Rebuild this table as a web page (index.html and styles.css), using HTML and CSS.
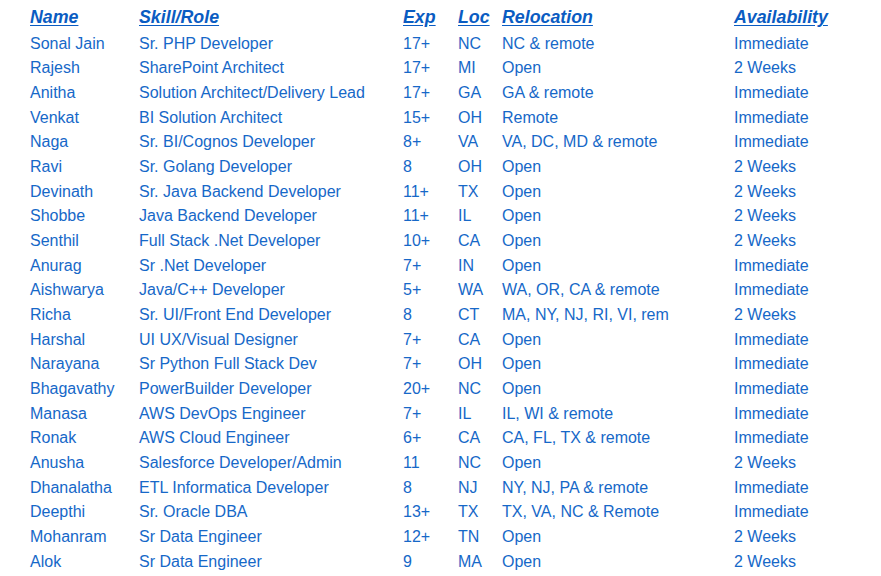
FILE: index.html
```html
<!DOCTYPE html>
<html>
<head>
<meta charset="utf-8">
<link rel="stylesheet" href="styles.css">
</head>
<body>
<div class="roster">
  <div class="row head">
    <span>Name</span><span>Skill/Role</span><span>Exp</span><span>Loc</span><span>Relocation</span><span>Availability</span>
  </div>
  <div class="row"><span>Sonal Jain</span><span>Sr. PHP Developer</span><span>17+</span><span>NC</span><span>NC &amp; remote</span><span>Immediate</span></div>
  <div class="row"><span>Rajesh</span><span>SharePoint Architect</span><span>17+</span><span>MI</span><span>Open</span><span>2 Weeks</span></div>
  <div class="row"><span>Anitha</span><span>Solution Architect/Delivery Lead</span><span>17+</span><span>GA</span><span>GA &amp; remote</span><span>Immediate</span></div>
  <div class="row"><span>Venkat</span><span>BI Solution Architect</span><span>15+</span><span>OH</span><span>Remote</span><span>Immediate</span></div>
  <div class="row"><span>Naga</span><span>Sr. BI/Cognos Developer</span><span>8+</span><span>VA</span><span>VA, DC, MD &amp; remote</span><span>Immediate</span></div>
  <div class="row"><span>Ravi</span><span>Sr. Golang Developer</span><span>8</span><span>OH</span><span>Open</span><span>2 Weeks</span></div>
  <div class="row"><span>Devinath</span><span>Sr. Java Backend Developer</span><span>11+</span><span>TX</span><span>Open</span><span>2 Weeks</span></div>
  <div class="row"><span>Shobbe</span><span>Java Backend Developer</span><span>11+</span><span>IL</span><span>Open</span><span>2 Weeks</span></div>
  <div class="row"><span>Senthil</span><span>Full Stack .Net Developer</span><span>10+</span><span>CA</span><span>Open</span><span>2 Weeks</span></div>
  <div class="row"><span>Anurag</span><span>Sr .Net Developer</span><span>7+</span><span>IN</span><span>Open</span><span>Immediate</span></div>
  <div class="row"><span>Aishwarya</span><span>Java/C++ Developer</span><span>5+</span><span>WA</span><span>WA, OR, CA &amp; remote</span><span>Immediate</span></div>
  <div class="row"><span>Richa</span><span>Sr. UI/Front End Developer</span><span>8</span><span>CT</span><span>MA, NY, NJ, RI, VI, rem</span><span>2 Weeks</span></div>
  <div class="row"><span>Harshal</span><span>UI UX/Visual Designer</span><span>7+</span><span>CA</span><span>Open</span><span>Immediate</span></div>
  <div class="row"><span>Narayana</span><span>Sr Python Full Stack Dev</span><span>7+</span><span>OH</span><span>Open</span><span>Immediate</span></div>
  <div class="row"><span>Bhagavathy</span><span>PowerBuilder Developer</span><span>20+</span><span>NC</span><span>Open</span><span>Immediate</span></div>
  <div class="row"><span>Manasa</span><span>AWS DevOps Engineer</span><span>7+</span><span>IL</span><span>IL, WI &amp; remote</span><span>Immediate</span></div>
  <div class="row"><span>Ronak</span><span>AWS Cloud Engineer</span><span>6+</span><span>CA</span><span>CA, FL, TX &amp; remote</span><span>Immediate</span></div>
  <div class="row"><span>Anusha</span><span>Salesforce Developer/Admin</span><span>11</span><span>NC</span><span>Open</span><span>2 Weeks</span></div>
  <div class="row"><span>Dhanalatha</span><span>ETL Informatica Developer</span><span>8</span><span>NJ</span><span>NY, NJ, PA &amp; remote</span><span>Immediate</span></div>
  <div class="row"><span>Deepthi</span><span>Sr. Oracle DBA</span><span>13+</span><span>TX</span><span>TX, VA, NC &amp; Remote</span><span>Immediate</span></div>
  <div class="row"><span>Mohanram</span><span>Sr Data Engineer</span><span>12+</span><span>TN</span><span>Open</span><span>2 Weeks</span></div>
  <div class="row"><span>Alok</span><span>Sr Data Engineer</span><span>9</span><span>MA</span><span>Open</span><span>2 Weeks</span></div>
</div>
</body>
</html>
```

FILE: styles.css
```css
html, body {
  margin: 0;
  padding: 0;
  background: #ffffff;
}
body {
  font-family: "Liberation Sans", Arial, sans-serif;
  color: #1668c8;
  overflow: hidden;
}
.roster {
  padding: 4px 0 0 30px;
}
.row {
  display: grid;
  grid-template-columns: 109px 264px 55px 44px 232px 120px;
  height: 24.67px;
  align-items: center;
  font-size: 16px;
  line-height: 18px;
  white-space: nowrap;
}
.row.head {
  height: 26.5px;
  margin-bottom: 1px;
  font-size: 17.8px;
  font-weight: bold;
  font-style: italic;
  text-decoration: underline;
  text-underline-offset: 2px;
  color: #0a5cc2;
}
```
